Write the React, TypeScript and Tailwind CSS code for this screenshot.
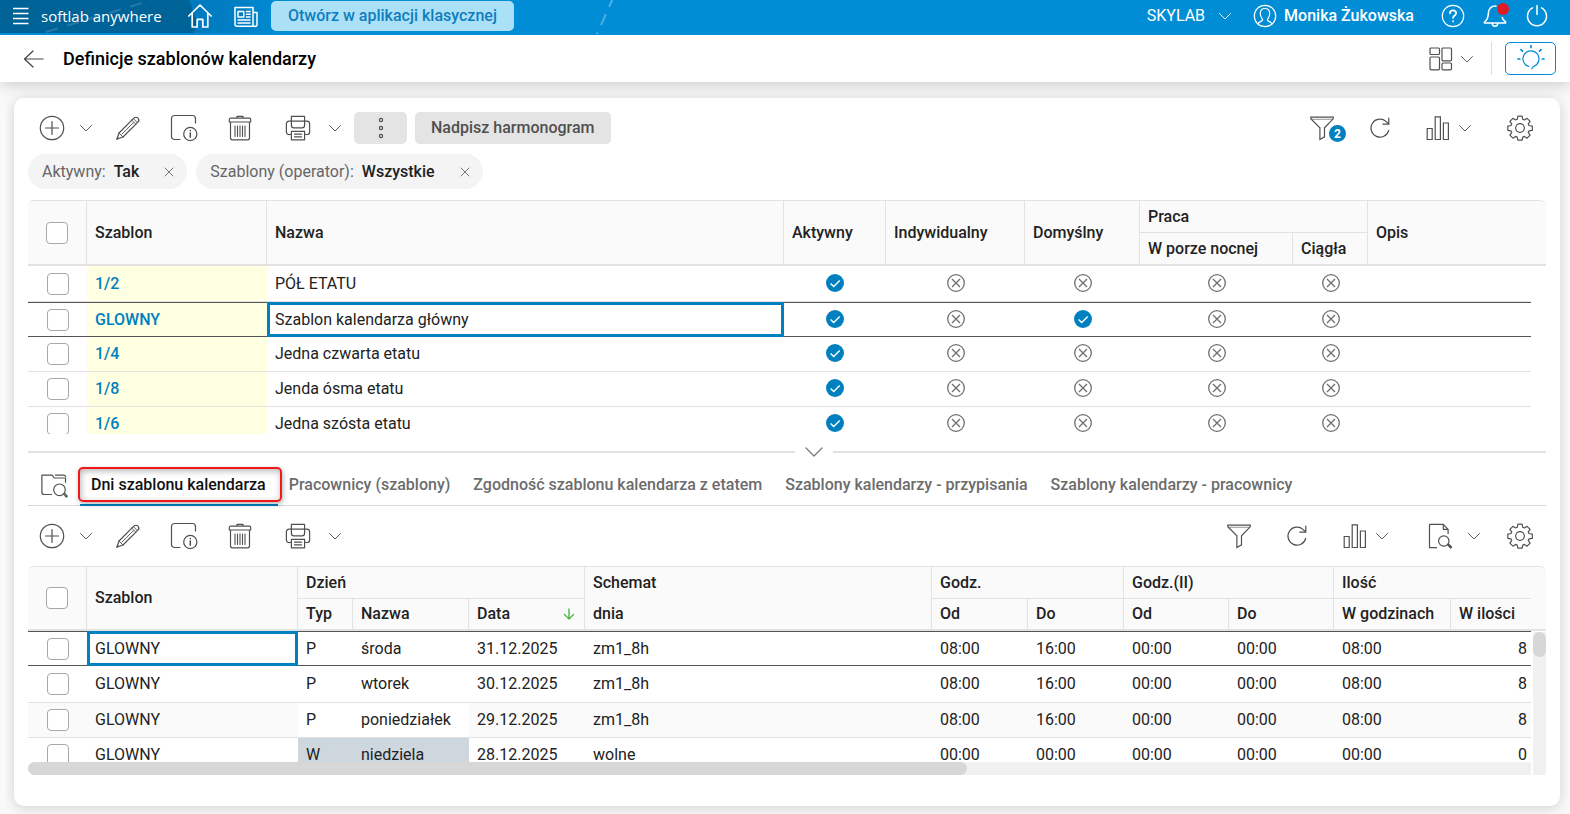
import React, { useState } from 'react';

type IconProps = { className?: string; children: React.ReactNode; box?: string };

const Icon = ({ className = 'h-[26px] w-[26px]', box = '0 0 26 26', children }: IconProps) => (
  <svg
    className={`shrink-0 ${className}`}
    viewBox={box}
    fill="none"
    stroke="currentColor"
    strokeWidth="1.2"
    strokeLinecap="round"
    strokeLinejoin="round"
    aria-hidden="true"
  >
    {children}
  </svg>
);

const ChevronIcon = () => (
  <Icon className="h-[14px] w-[14px]" box="0 0 14 14">
    <path d="M1.5 4.5 7 10l5.5-5.5" strokeWidth="0.9" />
  </Icon>
);

const PlusIcon = () => (
  <Icon>
    <circle cx="13" cy="13" r="11.7" />
    <path d="M13 6.5v13M6.5 13h13" />
  </Icon>
);

const PencilIcon = () => (
  <Icon>
    <path d="M1.8 24.2 4 18 18.8 3.1a2.6 2.6 0 0 1 4.1 4.1L8 22z" strokeWidth="1.2" />
    <path d="M16.8 5.2 20.9 9.3M18.4 3.6l4.1 4.1M4 18l4 4M6.8 19.2 18.6 7.5M1.8 24.2l1.6-1.4" strokeWidth="0.9" />
  </Icon>
);

const FormInfoIcon = () => (
  <Icon className="h-[28px] w-[28px]" box="0 0 28 28">
    <path d="M10 25.5H4.5a3 3 0 0 1-3-3v-18a3 3 0 0 1 3-3h18a3 3 0 0 1 3 3V9" />
    <circle cx="20.3" cy="20" r="6.6" />
    <path d="M20.3 19v4.2M20.3 16.4v.3" strokeWidth="1.5" />
  </Icon>
);

const TrashIcon = () => (
  <Icon>
    <path d="M10 3V1.4h6V3M3.5 3.2h19a1.2 1.2 0 0 1 1.2 1.2V7H2.3V4.4a1.2 1.2 0 0 1 1.2-1.2zM3.5 7v15.8a2 2 0 0 0 2 2h15a2 2 0 0 0 2-2V7" />
    <path d="M8 11v10.5M10.5 11v10.5M13 11v10.5M15.5 11v10.5M18 11v10.5" strokeWidth="1.1" />
  </Icon>
);

const PrinterIcon = () => (
  <Icon>
    <path d="M6.4 6.2V1.4h13.2v4.8M6.4 19.5H4a2.6 2.6 0 0 1-2.6-2.6V8.8A2.6 2.6 0 0 1 4 6.2h2.4v4a2.6 2.6 0 0 0 2.6 2.6h8a2.6 2.6 0 0 0 2.6-2.6v-4H22a2.6 2.6 0 0 1 2.6 2.6v8.1a2.6 2.6 0 0 1-2.6 2.6h-2.4" />
    <path d="M6.4 6.2h13.2M6.4 16.4h13.2v8.4H6.4zM9.5 19.2h7M9.5 21.8h7" />
  </Icon>
);

const KebabIcon = () => (
  <Icon>
    <circle cx="13" cy="5" r="1.6" />
    <circle cx="13" cy="13" r="1.6" />
    <circle cx="13" cy="21" r="1.6" />
  </Icon>
);

const FunnelIcon = () => (
  <Icon>
    <path d="M1.8 2.2h22.4v1.6l-8.7 9v9l-4.6 2.6V12.8L1.8 3.8z" strokeLinejoin="miter" />
    <path d="M2.5 4.3h21" strokeWidth=".6" />
  </Icon>
);

const RefreshIcon = () => (
  <Icon>
    <path d="M21.7 15.3A9 9 0 1 1 19 6.4l2.6 2.4" />
    <path d="M21.8 3.2v5.9h-6" />
  </Icon>
);

const BarsIcon = () => (
  <Icon>
    <path d="M2.2 13.5h5v11h-5zM10.2 1.8h5.2v22.7h-5.2zM18.4 8h5v16.5h-5z" strokeLinejoin="miter" />
  </Icon>
);

const GearIcon = () => (
  <Icon>
    <circle cx="13" cy="13" r="4.3" />
    <path d="M10.9 1.2h4.2l.7 3.1 1.6.7 2.7-1.7 3 3-1.8 2.6.7 1.6 3.3.6v4.2l-3.3.6-.7 1.6 1.8 2.7-3 3-2.7-1.8-1.6.7-.7 3.1h-4.2l-.7-3.1-1.6-.7-2.7 1.8-3-3 1.8-2.7-.7-1.6-3.2-.6v-4.2l3.2-.6.7-1.6-1.8-2.6 3-3L8.6 5l1.6-.7z" />
  </Icon>
);

const DocSearchIcon = () => (
  <Icon>
    <path d="M9.5 24.7h-7V1.3h13.8l4.8 5v4.2M16.3 1.3v5h4.8" />
    <circle cx="16.8" cy="18" r="5.2" />
    <path d="m20.6 21.8 3 3.2 1-1-3.2-3" />
  </Icon>
);

const FolderSearchIcon = () => (
  <Icon className="h-[28px] w-[28px]" box="0 0 28 28">
    <path d="M11.5 24.5h-7a2.6 2.6 0 0 1-2.6-2.6V5.2h10.300l2 2.800h11.300v4.3M15.5 5.2h8a2.2 2.2 0 0 1 2.2 1.2" />
    <circle cx="19.5" cy="19.8" r="5.8" />
    <path d="m23.6 24.1 2.7 3 1.1-1-2.9-2.9" />
  </Icon>
);

const HomeIcon = () => (
  <Icon>
    <path d="M1.8 13 13 2l11.2 11M5.2 10v14h5v-7.6h5.6V24h5V10" strokeWidth="1.7" />
  </Icon>
);

const NewsIcon = () => (
  <Icon>
    <path d="M20.5 9.5H24v12a2 2 0 0 1-4 0V4.5H2v16.8a2 2 0 0 0 2 2h18" strokeWidth="1.5" />
    <path d="M5 8.5h5.8v5.6H5zM13.5 8.5h3.6M13.5 11.2h3.6M13.5 14h3.6M5 17h12M5 20h12" strokeWidth="1.5" />
  </Icon>
);

const UserIcon = () => (
  <Icon>
    <circle cx="13" cy="13" r="10.7" />
    <path d="M6 20.9c.6-2.3 3.9-2.2 4.6-3.9.2-1.1-2.6-3-2.3-7 .2-2.5 2.1-4.5 4.7-4.5s4.5 2 4.7 4.5c.3 4-2.5 5.9-2.3 7 .7 1.7 4 1.6 4.6 3.9" />
  </Icon>
);

const HelpIcon = () => (
  <Icon>
    <circle cx="13" cy="13" r="10.7" />
    <path d="M10 10.3c0-1.8 1.3-2.9 3-2.9s3.1 1.1 3.1 2.8c0 2.3-3 2.3-3 4.8M13.1 18.1v.4" strokeWidth="1.7" />
  </Icon>
);

const BellIcon = () => (
  <Icon>
    <path d="M14 3.2a6.5 6.5 0 0 0-7.6 6.3c0 5.5-1 7.5-4 9.5v1h21.2v-1c-2.2-1.4-3-2.5-3.4-4.5M10.3 20.5a2.7 2.7 0 0 0 5.4 0" strokeWidth="1.5" />
  </Icon>
);

const PowerIcon = () => (
  <Icon>
    <path d="M8.5 4.8a9.5 9.5 0 1 0 9 0M13 2.5v9" strokeWidth="1.5" />
  </Icon>
);

const DashboardIcon = () => (
  <Icon>
    <rect x="2" y="2" width="9.5" height="6.5" rx="1" />
    <rect x="2" y="11" width="9.5" height="12.8" rx="1" />
    <rect x="14" y="2" width="9.5" height="12.8" rx="1" />
    <rect x="14" y="17" width="9.5" height="6.8" rx="1" />
  </Icon>
);

const BulbIcon = () => (
  <Icon className="h-[28px] w-[28px]" box="0 0 28 28">
    <path d="M11.8 21.5a8 8 0 1 1 5.2-.3c-1.3.5-1.5 1.3-2.2 2.6" />
    <path d="M14 .8v1.7M4 4.7l1.5 1.5M24 4.7l-1.5 1.5M1 14h1.8M25.2 14H27" strokeWidth="1.7" />
  </Icon>
);

const CheckMark = () => (
  <svg className="mx-auto block h-[18px] w-[18px]" viewBox="0 0 18 18" fill="none" role="img" aria-label="Tak">
    <circle cx="9" cy="9" r="9" fill="#0080bf" />
    <path d="m4.6 9.5 3.1 3 6-6" stroke="#fff" strokeWidth="1.4" />
  </svg>
);

const CrossMark = () => (
  <svg className="mx-auto block h-[18px] w-[18px]" viewBox="0 0 18 18" fill="none" stroke="#6f6f6f" strokeWidth="1.3" role="img" aria-label="Nie">
    <circle cx="9" cy="9" r="8.3" />
    <path d="m5 5 8 8M13 5l-8 8" />
  </svg>
);

const ToolButton = ({ label, width = 'w-14', children }: { label: string; width?: string; children: React.ReactNode }) => (
  <button type="button" aria-label={label} className={`flex h-8 shrink-0 items-center justify-center text-[#505050] ${width}`}>
    {children}
  </button>
);

const EditTools = () => (
  <>
    <ToolButton label="Dodaj" width="w-12"><PlusIcon /></ToolButton>
    <ToolButton label="Więcej opcji dodawania" width="mr-1 w-5"><ChevronIcon /></ToolButton>
    <ToolButton label="Edytuj"><PencilIcon /></ToolButton>
    <ToolButton label="Szczegóły"><FormInfoIcon /></ToolButton>
    <ToolButton label="Usuń"><TrashIcon /></ToolButton>
    <ToolButton label="Drukuj" width="w-[60px]"><PrinterIcon /></ToolButton>
    <ToolButton label="Opcje wydruku" width="w-[14px]"><ChevronIcon /></ToolButton>
  </>
);

const Checkbox = ({ label }: { label: string }) => (
  <input
    type="checkbox"
    aria-label={label}
    className="mx-auto block h-[22px] w-[22px] appearance-none rounded border border-[#a8a8a8] bg-white checked:bg-[#0080bf]"
  />
);

const Chip = ({ label, value }: { label: string; value: string }) => (
  <div className="flex h-[35px] items-center rounded-full bg-[#f4f4f4] pr-3 pl-[14px]">
    <span className="text-[#666]">{label}</span>
    <span className="ml-2 font-medium text-[#222]">{value}</span>
    <button type="button" aria-label={`Usuń filtr ${label}`} className="ml-6 text-[#777]">
      <Icon className="h-3 w-3" box="0 0 12 12">
        <path d="m2 2 8 8M10 2l-8 8" strokeWidth="1" />
      </Icon>
    </button>
  </div>
);

const templates = [
  { code: '1/2', name: 'PÓŁ ETATU', flags: [true, false, false, false, false] },
  { code: 'GLOWNY', name: 'Szablon kalendarza główny', flags: [true, false, true, false, false] },
  { code: '1/4', name: 'Jedna czwarta etatu', flags: [true, false, false, false, false] },
  { code: '1/8', name: 'Jenda ósma etatu', flags: [true, false, false, false, false] },
  { code: '1/6', name: 'Jedna szósta etatu', flags: [true, false, false, false, false] },
];

const days = [
  { type: 'P', name: 'środa', date: '31.12.2025', scheme: 'zm1_8h', from: '08:00', to: '16:00', hours: '08:00', count: 8 },
  { type: 'P', name: 'wtorek', date: '30.12.2025', scheme: 'zm1_8h', from: '08:00', to: '16:00', hours: '08:00', count: 8 },
  { type: 'P', name: 'poniedziałek', date: '29.12.2025', scheme: 'zm1_8h', from: '08:00', to: '16:00', hours: '08:00', count: 8 },
  { type: 'W', name: 'niedziela', date: '28.12.2025', scheme: 'wolne', from: '00:00', to: '00:00', hours: '00:00', count: 0 },
];

const tabs = [
  'Dni szablonu kalendarza',
  'Pracownicy (szablony)',
  'Zgodność szablonu kalendarza z etatem',
  'Szablony kalendarzy - przypisania',
  'Szablony kalendarzy - pracownicy',
];

const tableClass = 'w-full table-fixed border-separate border-spacing-0 text-left';
const headTop = 'h-[33px] border-t border-r border-b border-[#e2e2e2] px-2 font-medium';
const headSub = 'border-r border-b-2 border-[#e2e2e2] px-2 font-medium';
const headTall = 'border-t border-r border-b-2 border-[#e2e2e2] px-2 font-medium';
const headLast = 'rounded-tr-md border-t border-b-2 border-[#e2e2e2]';
const cell = 'border-b border-[#e2e2e2] px-2';
const activeCell = 'border-t border-b border-[#555] px-2';
const focusCell = 'border-[3px] border-[#0080bf] px-[5px]';

const TemplatesTable = () => (
  <div className="h-[234px] overflow-hidden">
    <table className={tableClass}>
      <colgroup>
        <col className="w-[59px]" />
        <col className="w-[180px]" />
        <col className="w-[517px]" />
        <col className="w-[102px]" />
        <col className="w-[139px]" />
        <col className="w-[115px]" />
        <col className="w-[153px]" />
        <col className="w-[75px]" />
        <col />
        <col className="w-[15px]" />
      </colgroup>
      <thead className="bg-[#fafafa]">
        <tr>
          <th rowSpan={2} className={`${headTall} rounded-tl-md`}><Checkbox label="Zaznacz wszystkie szablony" /></th>
          <th rowSpan={2} className={headTall}>Szablon</th>
          <th rowSpan={2} className={headTall}>Nazwa</th>
          <th rowSpan={2} className={headTall}>Aktywny</th>
          <th rowSpan={2} className={headTall}>Indywidualny</th>
          <th rowSpan={2} className={headTall}>Domyślny</th>
          <th colSpan={2} className={headTop}>Praca</th>
          <th rowSpan={2} colSpan={2} className={`${headLast} px-2 font-medium`}>Opis</th>
        </tr>
        <tr className="h-[33px]">
          <th className={headSub}>W porze nocnej</th>
          <th className={headSub}>Ciągła</th>
        </tr>
      </thead>
      <tbody>
        {templates.map((row, i) => {
          const active = i === 1;
          const base = active ? activeCell : cell;
          return (
            <tr key={row.code} className={i === 0 ? 'h-9' : 'h-[35px]'}>
              <td className={base}><Checkbox label={`Zaznacz ${row.code}`} /></td>
              <td className={`${base} bg-[#ffffe1] font-medium`}>
                <a href="#szablon" className="text-[#0080bf]">{row.code}</a>
              </td>
              <td className={active ? focusCell : base}>{row.name}</td>
              {row.flags.map((flag, j) => (
                <td key={j} className={`${base} pb-[2px]`}>{flag ? <CheckMark /> : <CrossMark />}</td>
              ))}
              <td className={base} />
            </tr>
          );
        })}
      </tbody>
    </table>
  </div>
);

const DaysTable = () => (
  <div className="relative">
    <div className="h-[196px] overflow-hidden">
      <table className={tableClass}>
        <colgroup>
          <col className="w-[59px]" />
          <col className="w-[211px]" />
          <col className="w-[55px]" />
          <col className="w-[116px]" />
          <col className="w-[116px]" />
          <col />
          <col className="w-[96px]" />
          <col className="w-[96px]" />
          <col className="w-[105px]" />
          <col className="w-[105px]" />
          <col className="w-[117px]" />
          <col className="w-[80px]" />
          <col className="w-[15px]" />
        </colgroup>
        <thead className="bg-[#fafafa]">
          <tr>
            <th rowSpan={2} className={`${headTall} rounded-tl-md`}><Checkbox label="Zaznacz wszystkie dni" /></th>
            <th rowSpan={2} className={headTall}>Szablon</th>
            <th colSpan={3} className={headTop}>Dzień</th>
            <th rowSpan={2} className={`${headTall} leading-[31px]`}>Schemat<br />dnia</th>
            <th colSpan={2} className={headTop}>Godz.</th>
            <th colSpan={2} className={headTop}>Godz.(II)</th>
            <th colSpan={2} className="h-[33px] border-t border-b border-[#e2e2e2] px-2 font-medium">Ilość</th>
            <td rowSpan={2} className={headLast} />
          </tr>
          <tr className="h-8">
            <th className={headSub}>Typ</th>
            <th className={headSub}>Nazwa</th>
            <th className={headSub}>
              <div className="flex items-center justify-between">
                Data
                <Icon className="h-[14px] w-[14px] text-[#4cb84c]" box="0 0 14 14">
                  <path d="M7 2v10M2.5 7.5 7 12l4.5-4.5" strokeWidth="1.4" />
                </Icon>
              </div>
            </th>
            <th className={headSub}>Od</th>
            <th className={headSub}>Do</th>
            <th className={headSub}>Od</th>
            <th className={headSub}>Do</th>
            <th className={headSub}>W godzinach</th>
            <th className="border-b-2 border-[#e2e2e2] px-2 font-medium">W ilości</th>
          </tr>
        </thead>
        <tbody>
          {days.map((day, i) => {
            const base = i === 0 ? activeCell : cell;
            const dayTint = day.type === 'W' ? 'bg-[#ced7dd]' : 'bg-white';
            return (
              <tr key={day.date} className={`${i === 1 ? 'h-[37px]' : 'h-[35px]'} ${i === 2 ? 'bg-[#fafafa]' : 'bg-white'}`}>
                <td className={base}><Checkbox label={`Zaznacz ${day.date}`} /></td>
                <td className={i === 0 ? focusCell : base}>GLOWNY</td>
                <td className={`${base} ${dayTint}`}>{day.type}</td>
                <td className={`${base} ${dayTint}`}>{day.name}</td>
                <td className={base}>{day.date}</td>
                <td className={base}>{day.scheme}</td>
                <td className={base}>{day.from}</td>
                <td className={base}>{day.to}</td>
                <td className={base}>00:00</td>
                <td className={base}>00:00</td>
                <td className={base}>{day.hours}</td>
                <td className={`${base} pr-1 text-right`}>{day.count}</td>
              </tr>
            );
          })}
        </tbody>
      </table>
    </div>
    <div className="mr-[15px] h-[13px] rounded-l-full bg-[#f1f1f1]">
      <div className="h-full w-5/8 rounded-full bg-[#d7d7d7]" />
    </div>
    <div className="absolute top-[66px] right-0 bottom-0 w-[13px] bg-[#f1f1f1]">
      <div className="h-[25px] rounded-full bg-[#d7d7d7]" />
    </div>
  </div>
);

const TopBar = () => (
  <header className="relative flex h-[35px] items-center overflow-hidden bg-[#008dd5] pr-5 pb-[3px] pl-2 text-white">
    <svg className="absolute top-0 left-0 h-[35px] w-[640px]" viewBox="0 0 640 35" aria-hidden="true">
      <defs>
        <linearGradient id="barFade" x1="0" x2="1">
          <stop offset="0" stopColor="#0079bd" />
          <stop offset="0.6" stopColor="#007fc4" />
          <stop offset="1" stopColor="#008dd5" />
        </linearGradient>
      </defs>
      <path d="M180 0h100v33H180z" fill="url(#barFade)" />
      <path d="M0 0h189l8 22-3 11H0z" fill="#006398" />
      <path d="M46 32 152 0" stroke="#fff" strokeOpacity=".15" strokeWidth="2" strokeDasharray="12 10" />
      <path d="m614-4-17 38" stroke="#fff" strokeOpacity=".3" strokeWidth="2" strokeDasharray="12 8" />
    </svg>
    <button type="button" aria-label="Menu" className="relative">
      <Icon>
        <path d="M5 5.5h15.5M5 10.5h15.5M5 15.5h15.5M5 20.5h15.5" strokeWidth="1.7" strokeLinecap="butt" />
      </Icon>
    </button>
    <a href="#start" className="relative ml-[7px] w-[146px] font-['Open_Sans',sans-serif] text-[15px] font-medium">softlab anywhere</a>
    <button type="button" aria-label="Strona główna" className="relative"><HomeIcon /></button>
    <button type="button" aria-label="Aktualności" className="relative ml-5"><NewsIcon /></button>
    <button type="button" className="relative ml-3 h-[30px] rounded-[5px] bg-[#abe1f7] px-[17px] font-medium text-[#0f7dbd]">
      Otwórz w aplikacji klasycznej
    </button>
    <div className="ml-auto flex items-center">
      <button type="button" className="flex items-center gap-[13px]">
        SKYLAB <ChevronIcon />
      </button>
      <button type="button" className="ml-5 flex items-center gap-[6px] font-medium">
        <UserIcon /> Monika Żukowska
      </button>
      <button type="button" aria-label="Pomoc" className="ml-[26px]"><HelpIcon /></button>
      <button type="button" aria-label="Powiadomienia" className="relative ml-4">
        <BellIcon />
        <span className="absolute top-0 right-[-1px] h-3 w-3 rounded-full bg-[#e01b24]" />
      </button>
      <button type="button" aria-label="Wyloguj" className="ml-4"><PowerIcon /></button>
    </div>
  </header>
);

const App: React.FC = () => {
  const [activeTab, setActiveTab] = useState(0);

  return (
    <div className="min-h-screen bg-[#f9f9f9] font-['Roboto',sans-serif] text-base leading-5 text-[#222]">
      <TopBar />

      {/* Page title */}
      <div className="flex h-[47px] items-center bg-white pr-[14px] pl-[21px] shadow-[0_2px_16px_rgba(0,0,0,0.2)]">
        <button type="button" aria-label="Wstecz" className="text-[#444]">
          <Icon>
            <path d="M22 13H4M12 5l-8.5 8 8.5 8" strokeWidth="1.2" />
          </Icon>
        </button>
        <h1 className="ml-4 text-lg font-medium text-black">Definicje szablonów kalendarzy</h1>
        <button type="button" aria-label="Układ" className="ml-auto flex items-center gap-[6px] text-[#505050]">
          <DashboardIcon />
          <ChevronIcon />
        </button>
        <div className="ml-[17px] h-[33px] w-px bg-[#ddd]" />
        <button type="button" aria-label="Podpowiedzi" className="ml-[13px] flex h-[33px] w-[51px] items-center justify-center rounded-[5px] border border-[#008dd5] text-[#008dd5]">
          <BulbIcon />
        </button>
      </div>

      <main className="mr-[2px] ml-[6px] overflow-hidden px-2 pt-4 pb-2">
        <div className="rounded-[10px] bg-white px-[14px] pt-[14px] pb-[31px] shadow-[0_2px_14px_rgba(0,0,0,0.16)]">
          <div className="flex items-center">
            <EditTools />
            <button type="button" aria-label="Więcej" className="ml-3 flex h-8 w-[53px] items-center justify-center rounded-[5px] bg-[#e4e4e4] text-[#505050]">
              <KebabIcon />
            </button>
            <button type="button" className="ml-2 h-8 rounded-[5px] bg-[#e4e4e4] px-4 font-medium text-[#505050]">
              Nadpisz harmonogram
            </button>
            <div className="ml-auto flex items-center">
              <div className="relative">
                <ToolButton label="Filtr" width="w-[58px]"><FunnelIcon /></ToolButton>
                <span className="absolute top-[13px] right-[5px] flex h-[17px] w-[17px] items-center justify-center rounded-full bg-[#0080bf] text-xs font-bold text-white">2</span>
              </div>
              <ToolButton label="Odśwież" width="w-[58px]"><RefreshIcon /></ToolButton>
              <ToolButton label="Wykres" width="ml-3 w-[34px]"><BarsIcon /></ToolButton>
              <ToolButton label="Opcje wykresu" width="mr-[19px] w-5"><ChevronIcon /></ToolButton>
              <ToolButton label="Ustawienia" width="w-[52px]"><GearIcon /></ToolButton>
            </div>
          </div>

          <div className="mt-[10px] mb-[11px] flex gap-[9px]">
            <Chip label="Aktywny:" value="Tak" />
            <Chip label="Szablony (operator):" value="Wszystkie" />
          </div>

          <TemplatesTable />

          {/* Splitter */}
          <div className="mt-[17px] flex h-[2px] items-center">
            <div className="h-[2px] flex-1 bg-[#e2e2e2]" />
            <button type="button" aria-label="Zwiń panel" className="w-[38px] text-[#777]">
              <Icon className="mx-auto h-[18px] w-[18px]" box="0 0 18 18">
                <path d="m1 5 8 8 8-8" />
              </Icon>
            </button>
            <div className="h-[2px] w-[713px] bg-[#e2e2e2]" />
          </div>

          <nav className="mt-[9px] flex h-11 items-center shadow-[inset_0_-1px_0_#d8d8d8]">
            <button type="button" aria-label="Podgląd" className="mr-[12px] ml-3 text-[#505050]"><FolderSearchIcon /></button>
            {tabs.map((tab, i) => (
              <button
                key={tab}
                type="button"
                onClick={() => setActiveTab(i)}
                className={`relative h-11 border-b-2 pt-1 pr-3 pl-[11px] font-medium whitespace-nowrap ${
                  i === activeTab ? 'border-[#0080bf] text-[#111]' : 'border-transparent text-[#6c6c6c]'
                }`}
              >
                {tab}
                {i === 0 && (
                  <span className="absolute top-[5px] -right-1 -left-[2px] h-[35px] rounded-[5px] border-2 border-[#f01818] shadow-[1px_2px_5px_rgba(0,0,0,0.3),inset_1px_2px_6px_rgba(0,0,0,0.3)]" />
                )}
              </button>
            ))}
          </nav>

          <div className="my-[14px] flex items-center">
            <EditTools />
            <div className="ml-auto flex items-center">
              <ToolButton label="Filtr" width="w-[58px]"><FunnelIcon /></ToolButton>
              <ToolButton label="Odśwież" width="w-[58px]"><RefreshIcon /></ToolButton>
              <ToolButton label="Wykres" width="ml-3 w-[34px]"><BarsIcon /></ToolButton>
              <ToolButton label="Opcje wykresu" width="mr-6 w-5"><ChevronIcon /></ToolButton>
              <ToolButton label="Podgląd dokumentu" width="w-12"><DocSearchIcon /></ToolButton>
              <ToolButton label="Opcje podglądu" width="mr-[10px] w-5"><ChevronIcon /></ToolButton>
              <ToolButton label="Ustawienia" width="w-[52px]"><GearIcon /></ToolButton>
            </div>
          </div>

          <DaysTable />
        </div>
      </main>
    </div>
  );
};

export default App;
